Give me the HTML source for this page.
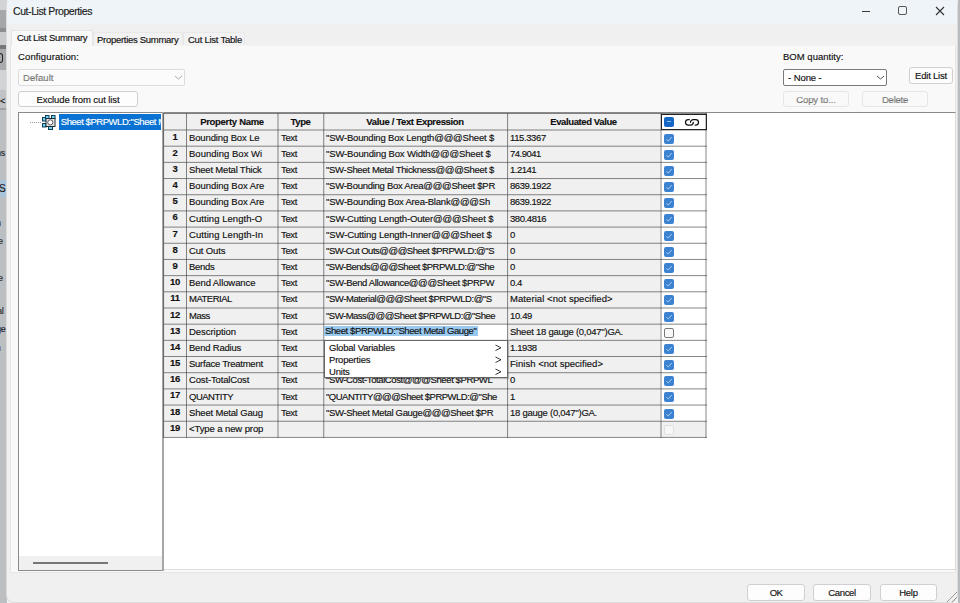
<!DOCTYPE html>
<html><head><meta charset="utf-8">
<style>
*{box-sizing:border-box;margin:0;padding:0}
html,body{width:960px;height:603px;overflow:hidden;background:#f3f3f3}
body{position:relative;font-family:"Liberation Sans",sans-serif;font-size:9.5px;letter-spacing:-0.2px;color:#111;-webkit-text-stroke:0.15px #111}
.a{position:absolute}
.t{position:absolute;white-space:nowrap;line-height:11px}
.btn{position:absolute;background:#fdfdfd;border:1px solid #d0d0d0;border-radius:3px;text-align:center;line-height:15px}
.dis{color:#a0a0a0;background:#f9f9f9;border-color:#e6e6e6}
.grid div.c{position:absolute;overflow:hidden;white-space:nowrap;line-height:15px;padding-left:2px}
.cb{position:absolute;width:10px;height:10px;border-radius:2px;background:#3b82d1}
</style></head><body>
<!-- background app strip -->
<div class="a" style="left:0;top:0;width:7px;height:603px;background:#bcbfc2"></div>
<div class="a" style="left:0;top:0;width:7px;height:10px;background:#d3d4d5"></div>
<div class="a" style="left:0;top:10px;width:7px;height:18px;background:#a5a7a9"></div>
<div class="a" style="left:0;top:28px;width:7px;height:4px;background:#8c8e90"></div>
<div class="a" style="left:0;top:32px;width:7px;height:13px;background:#c9cbcd"></div>
<div class="a" style="left:0;top:45px;width:7px;height:4px;background:#75777a"></div>
<div class="a" style="left:0;top:49px;width:7px;height:21px;background:#a9abae"></div>
<div class="a" style="left:0;top:53px;width:3px;height:10px;border:1.5px solid #222;border-left:none;border-radius:0 4px 4px 0"></div>
<div class="a" style="left:0;top:70px;width:7px;height:20px;background:#d2d3d4"></div>
<div class="a" style="left:0;top:90px;width:7px;height:20px;background:#c0c2c5"></div>
<div class="a" style="left:0;top:108px;width:7px;height:2px;background:#a0a2a5"></div>
<div class="t" style="left:0;top:96px;font-size:9px;color:#222">&lt;</div>
<div class="a" style="left:0;top:180px;width:7px;height:17px;background:#a9c3d8"></div>
<div class="t" style="left:-1px;top:183px;font-size:10px;color:#222">S</div>
<div class="t" style="left:-4px;top:148px;font-size:9px;color:#333">ns</div>
<div class="t" style="left:-4px;top:218px;font-size:9px;color:#444">n</div>
<div class="t" style="left:-2px;top:236px;font-size:9px;color:#333">e</div>
<div class="t" style="left:-2px;top:273px;font-size:9px;color:#333">e</div>
<div class="t" style="left:-3px;top:306px;font-size:9px;color:#333">al</div>
<div class="t" style="left:-4px;top:324px;font-size:9px;color:#223">ge</div>
<div class="t" style="left:-4px;top:343px;font-size:9px;color:#888">n</div>
<div class="a" style="left:958px;top:0;width:2px;height:603px;background:#b9bcbf"></div>

<!-- dialog -->
<div class="a" style="left:6px;top:0;width:952px;height:603px;background:#f0f0f0;border:1px solid #dcdcdc;border-top-color:#eef2f7;border-radius:5px 5px 8px 8px;overflow:hidden">
  <div class="a" style="left:0;top:0;width:952px;height:23px;background:#eff4f9"></div>
</div>
<div class="t" style="left: 13px; top: 6px; font-size: 10.5px; color: rgb(34, 34, 34); letter-spacing: -0.419px;">Cut-List Properties</div>
<!-- title controls -->
<div class="a" style="left:862px;top:10.5px;width:8px;height:1px;background:#3a3a3a"></div>
<div class="a" style="left:898px;top:6px;width:9px;height:9px;border:1.7px solid #555;border-radius:2px"></div>
<svg class="a" style="left:935px;top:6px" width="10" height="10" viewBox="0 0 10 10"><path d="M1 1L9 9M9 1L1 9" stroke="#333" stroke-width="1.1"></path></svg>

<!-- tab panel -->
<div class="a" style="left:10px;top:45px;width:946px;height:528px;background:#f9f9f9;border:1px solid #e6e6e6;border-top-color:#f3f3f3"></div>
<div class="a" style="left:11px;top:30px;width:82px;height:16px;background:#f9f9f9;border:1px solid #e4e4e4;border-bottom:none"></div>
<div class="a" style="left:93px;top:32px;width:90px;height:13px;background:#f2f2f2;border:1px solid #e8e8e8;border-bottom:none"></div>
<div class="a" style="left:183px;top:32px;width:62px;height:13px;background:#f2f2f2;border:1px solid #e8e8e8;border-bottom:none"></div>
<div class="t" style="left: 17px; top: 32px; letter-spacing: -0.325px;">Cut List Summary</div>
<div class="t" style="left: 97px; top: 33.5px; letter-spacing: -0.288px;">Properties Summary</div>
<div class="t" style="left: 188px; top: 33.5px; letter-spacing: -0.242px;">Cut List Table</div>

<!-- left controls -->
<div class="t" style="left: 18px; top: 51px; letter-spacing: 0.131px;">Configuration:</div>
<div class="a" style="left:18px;top:69px;width:167px;height:17px;background:#fbfbfb;border:1px solid #dcdcdc;border-radius:2px"></div>
<div class="t" style="left: 23px; top: 72px; color: rgb(154, 154, 154); letter-spacing: 0.057px;">Default</div>
<svg class="a" style="left:173.5px;top:74.5px" width="9" height="6" viewBox="0 0 9 6"><path d="M1 1L4.5 4L8 1" stroke="#a0a0a0" fill="none" stroke-width="0.9"></path></svg>
<div class="btn" style="left:18px;top:91px;width:120px;height:16px"><span style="letter-spacing: -0.096px;">Exclude from cut list</span></div>

<!-- right controls -->
<div class="t" style="left: 783px; top: 51px; letter-spacing: 0.016px;">BOM quantity:</div>
<div class="a" style="left:783px;top:69px;width:104px;height:17px;background:#fff;border:1px solid #7a7a7a;border-radius:2px"></div>
<div class="t" style="left: 788px; top: 72px; letter-spacing: -0.077px;">- None -</div>
<svg class="a" style="left:875.5px;top:74.5px" width="9" height="6" viewBox="0 0 9 6"><path d="M1 1L4.5 4L8 1" stroke="#444" fill="none" stroke-width="0.9"></path></svg>
<div class="btn" style="left:909px;top:67px;width:44px;height:17px"><span style="letter-spacing: -0.2px;">Edit List</span></div>
<div class="btn dis" style="left:783px;top:91px;width:66px;height:16px"><span style="letter-spacing: -0.107px;">Copy to...</span></div>
<div class="btn dis" style="left:862px;top:91px;width:66px;height:16px"><span style="letter-spacing: -0.244px;">Delete</span></div>

<!-- tree -->
<div class="a" style="left:18px;top:112px;width:146px;height:459px;background:#fff;border:1px solid #8a8a8a;border-right:none"></div>
<div class="a" style="left:19px;top:556px;width:144px;height:14px;background:#f0f0f0"></div>
<div class="a" style="left:33px;top:562px;width:75px;height:1.5px;background:#777"></div>
<div class="a" style="left:30px;top:122px;width:11px;height:0;border-top:1px dotted #999"></div>
<svg class="a" style="left:42px;top:115px" width="14" height="15" viewBox="0 0 14 15">
<rect x="0.5" y="2.5" width="3.5" height="3.5" fill="#74d2f2" stroke="#0e3f58" stroke-width="1"></rect>
<rect x="0.5" y="8.5" width="3.5" height="3.5" fill="#74d2f2" stroke="#0e3f58" stroke-width="1"></rect>
<rect x="3.5" y="0.5" width="3.5" height="3" fill="#74d2f2" stroke="#0e3f58" stroke-width="1"></rect>
<rect x="9.5" y="0.5" width="3.5" height="3" fill="#74d2f2" stroke="#0e3f58" stroke-width="1"></rect>
<rect x="6.5" y="11.5" width="4" height="3" fill="#74d2f2" stroke="#0e3f58" stroke-width="1"></rect>
<rect x="4" y="3.5" width="9" height="8" fill="#e8e8e8" stroke="#1e2e36" stroke-width="1"></rect>
<circle cx="8.3" cy="7.4" r="2.6" fill="#fff" stroke="#555" stroke-width="1"></circle>
</svg>
<div class="a" style="left:59px;top:114px;width:102px;height:16px;background:#0a72d2;overflow:hidden"><div class="t" style="left:1.8px;top:2px;color:#fff;-webkit-text-stroke:0.15px #fff;letter-spacing:-0.45px">Sheet $PRPWLD:"Sheet Metal</div></div>
<div class="a" style="left:162px;top:112px;width:2px;height:459px;background:#a6a6a6"></div>

<!-- table area -->
<div class="a" style="left:164px;top:112px;width:792px;height:458px;background:#fff;border-top:1px solid #8a8a8a;border-right:1px solid #dcdcdc;border-bottom:1px solid #dcdcdc"></div>
<div class="a" style="left:164px;top:113px;width:542px;height:324.42px;background:#f0f0f0"></div>
<div class="a" style="left:660px;top:130.0px;width:46px;height:291.24px;background:#fff"></div>
<div class="a" style="left:660px;top:113px;width:46px;height:17.0px;background:#fff"></div>
<div class="a" style="left:323px;top:324px;width:184px;height:16px;background:#fff"></div>
<div class="a" style="left:164px;top:113px;width:543px;height:1px;background:rgba(60,60,60,0.620)"></div>
<div class="a" style="left:164px;top:129px;width:543px;height:1px;background:rgba(60,60,60,0.310)"></div>
<div class="a" style="left:164px;top:130px;width:543px;height:1px;background:rgba(60,60,60,0.310)"></div>
<div class="a" style="left:164px;top:145px;width:543px;height:1px;background:rgba(60,60,60,0.198)"></div>
<div class="a" style="left:164px;top:146px;width:543px;height:1px;background:rgba(60,60,60,0.422)"></div>
<div class="a" style="left:164px;top:161px;width:543px;height:1px;background:rgba(60,60,60,0.087)"></div>
<div class="a" style="left:164px;top:162px;width:543px;height:1px;background:rgba(60,60,60,0.533)"></div>
<div class="a" style="left:164px;top:178px;width:543px;height:1px;background:rgba(60,60,60,0.595)"></div>
<div class="a" style="left:164px;top:179px;width:543px;height:1px;background:rgba(60,60,60,0.025)"></div>
<div class="a" style="left:164px;top:194px;width:543px;height:1px;background:rgba(60,60,60,0.484)"></div>
<div class="a" style="left:164px;top:195px;width:543px;height:1px;background:rgba(60,60,60,0.136)"></div>
<div class="a" style="left:164px;top:210px;width:543px;height:1px;background:rgba(60,60,60,0.372)"></div>
<div class="a" style="left:164px;top:211px;width:543px;height:1px;background:rgba(60,60,60,0.248)"></div>
<div class="a" style="left:164px;top:226px;width:543px;height:1px;background:rgba(60,60,60,0.260)"></div>
<div class="a" style="left:164px;top:227px;width:543px;height:1px;background:rgba(60,60,60,0.360)"></div>
<div class="a" style="left:164px;top:242px;width:543px;height:1px;background:rgba(60,60,60,0.149)"></div>
<div class="a" style="left:164px;top:243px;width:543px;height:1px;background:rgba(60,60,60,0.471)"></div>
<div class="a" style="left:164px;top:258px;width:543px;height:1px;background:rgba(60,60,60,0.037)"></div>
<div class="a" style="left:164px;top:259px;width:543px;height:1px;background:rgba(60,60,60,0.583)"></div>
<div class="a" style="left:164px;top:275px;width:543px;height:1px;background:rgba(60,60,60,0.546)"></div>
<div class="a" style="left:164px;top:276px;width:543px;height:1px;background:rgba(60,60,60,0.074)"></div>
<div class="a" style="left:164px;top:291px;width:543px;height:1px;background:rgba(60,60,60,0.434)"></div>
<div class="a" style="left:164px;top:292px;width:543px;height:1px;background:rgba(60,60,60,0.186)"></div>
<div class="a" style="left:164px;top:307px;width:543px;height:1px;background:rgba(60,60,60,0.322)"></div>
<div class="a" style="left:164px;top:308px;width:543px;height:1px;background:rgba(60,60,60,0.298)"></div>
<div class="a" style="left:164px;top:323px;width:543px;height:1px;background:rgba(60,60,60,0.211)"></div>
<div class="a" style="left:164px;top:324px;width:543px;height:1px;background:rgba(60,60,60,0.409)"></div>
<div class="a" style="left:164px;top:339px;width:543px;height:1px;background:rgba(60,60,60,0.099)"></div>
<div class="a" style="left:164px;top:340px;width:543px;height:1px;background:rgba(60,60,60,0.521)"></div>
<div class="a" style="left:164px;top:356px;width:543px;height:1px;background:rgba(60,60,60,0.608)"></div>
<div class="a" style="left:164px;top:372px;width:543px;height:1px;background:rgba(60,60,60,0.496)"></div>
<div class="a" style="left:164px;top:373px;width:543px;height:1px;background:rgba(60,60,60,0.124)"></div>
<div class="a" style="left:164px;top:388px;width:543px;height:1px;background:rgba(60,60,60,0.384)"></div>
<div class="a" style="left:164px;top:389px;width:543px;height:1px;background:rgba(60,60,60,0.236)"></div>
<div class="a" style="left:164px;top:404px;width:543px;height:1px;background:rgba(60,60,60,0.273)"></div>
<div class="a" style="left:164px;top:405px;width:543px;height:1px;background:rgba(60,60,60,0.347)"></div>
<div class="a" style="left:164px;top:420px;width:543px;height:1px;background:rgba(60,60,60,0.161)"></div>
<div class="a" style="left:164px;top:421px;width:543px;height:1px;background:rgba(60,60,60,0.459)"></div>
<div class="a" style="left:164px;top:436px;width:543px;height:1px;background:rgba(60,60,60,0.050)"></div>
<div class="a" style="left:164px;top:437px;width:543px;height:1px;background:rgba(60,60,60,0.570)"></div>
<div class="a" style="left:163px;top:113px;width:1px;height:324.92px;background:rgba(60,60,60,0.558)"></div>
<div class="a" style="left:164px;top:113px;width:1px;height:324.92px;background:rgba(60,60,60,0.062)"></div>
<div class="a" style="left:186px;top:113px;width:1px;height:324.92px;background:rgba(60,60,60,0.620)"></div>
<div class="a" style="left:277px;top:113px;width:1px;height:324.92px;background:rgba(60,60,60,0.310)"></div>
<div class="a" style="left:278px;top:113px;width:1px;height:324.92px;background:rgba(60,60,60,0.310)"></div>
<div class="a" style="left:323px;top:113px;width:1px;height:324.92px;background:rgba(60,60,60,0.465)"></div>
<div class="a" style="left:324px;top:113px;width:1px;height:324.92px;background:rgba(60,60,60,0.155)"></div>
<div class="a" style="left:507px;top:113px;width:1px;height:324.92px;background:rgba(60,60,60,0.558)"></div>
<div class="a" style="left:508px;top:113px;width:1px;height:324.92px;background:rgba(60,60,60,0.062)"></div>
<div class="a" style="left:660px;top:113px;width:1px;height:324.92px;background:rgba(60,60,60,0.310)"></div>
<div class="a" style="left:661px;top:113px;width:1px;height:324.92px;background:rgba(60,60,60,0.310)"></div>
<div class="a" style="left:705px;top:113px;width:1px;height:324.92px;background:rgba(60,60,60,0.310)"></div>
<div class="a" style="left:706px;top:113px;width:1px;height:324.92px;background:rgba(60,60,60,0.310)"></div>
<div class="t" style="left:186px;width:92px;top:116px;text-align:center;font-weight:bold"><span style="letter-spacing: -0.306px;">Property Name</span></div>
<div class="t" style="left:278px;width:45px;top:116px;text-align:center;font-weight:bold"><span style="letter-spacing: -0.368px;">Type</span></div>
<div class="t" style="left:323px;width:184px;top:116px;text-align:center;font-weight:bold"><span style="letter-spacing: -0.345px;">Value / Text Expression</span></div>
<div class="t" style="left:507px;width:153px;top:116px;text-align:center;font-weight:bold"><span style="letter-spacing: -0.396px;">Evaluated Value</span></div>
<div class="a" style="left:660.5px;top:113.5px;width:46px;height:16.5px;border:1.2px solid #222;background:transparent"></div>
<div class="a" style="left:664px;top:117px;width:10px;height:10px;background:#1467c4;border-radius:2px"></div>
<div class="a" style="left:667px;top:121px;width:4px;height:1.2px;background:#8fc0ef"></div>
<svg class="a" style="left:684px;top:118px" width="16" height="9" viewBox="0 0 16 9"><path d="M5.3 1.5H4.35A2.85 2.85 0 0 0 4.35 7.2H6.45A2.85 2.85 0 0 0 9.3 4.35M6.5 4.35A2.85 2.85 0 0 1 9.35 1.5H11.65A2.85 2.85 0 0 1 11.65 7.2H11.2" stroke="#111" stroke-width="1.25" fill="none" stroke-linecap="round"></path></svg>
<div class="t" style="left:164px;width:22px;top:130.5px;text-align:center;font-weight:bold">1</div>
<div class="a" style="left:189px;top:131.6px;width:88px;height:12px;overflow:hidden"><div class="t" style="left: 0px; top: 0px; letter-spacing: -0.125px;">Bounding Box Le</div></div>
<div class="t" style="left: 281px; top: 131.6px; letter-spacing: -0.331px;">Text</div>
<div class="a" style="left:326px;top:131.6px;width:180px;height:12px;overflow:hidden"><div class="t" style="left: 0px; top: 0px; letter-spacing: -0.188px;">"SW-Bounding Box Length@@@Sheet $</div></div>
<div class="a" style="left:510px;top:131.6px;width:149px;height:12px;overflow:hidden"><div class="t" style="left: 0px; top: 0px; letter-spacing: -0.391px;">115.3367</div></div>
<div class="cb" style="left:664px;top:133.5px"></div>
<svg class="a" style="left:665px;top:134.5px" width="8" height="8" viewBox="0 0 8 8"><path d="M1.3 4.2L3.2 6L6.8 2" stroke="#b5d4f2" stroke-width="0.9" fill="none"></path></svg>
<div class="t" style="left:164px;width:22px;top:146.7px;text-align:center;font-weight:bold">2</div>
<div class="a" style="left:189px;top:147.8px;width:88px;height:12px;overflow:hidden"><div class="t" style="left: 0px; top: 0px; letter-spacing: 0.022px;">Bounding Box Wi</div></div>
<div class="t" style="left: 281px; top: 147.8px; letter-spacing: -0.331px;">Text</div>
<div class="a" style="left:326px;top:147.8px;width:180px;height:12px;overflow:hidden"><div class="t" style="left: 0px; top: 0px; letter-spacing: -0.148px;">"SW-Bounding Box Width@@@Sheet $</div></div>
<div class="a" style="left:510px;top:147.8px;width:149px;height:12px;overflow:hidden"><div class="t" style="left: 0px; top: 0px; letter-spacing: -0.5px;">74.9041</div></div>
<div class="cb" style="left:664px;top:149.7px"></div>
<svg class="a" style="left:665px;top:150.7px" width="8" height="8" viewBox="0 0 8 8"><path d="M1.3 4.2L3.2 6L6.8 2" stroke="#b5d4f2" stroke-width="0.9" fill="none"></path></svg>
<div class="t" style="left:164px;width:22px;top:162.9px;text-align:center;font-weight:bold">3</div>
<div class="a" style="left:189px;top:164.0px;width:88px;height:12px;overflow:hidden"><div class="t" style="left: 0px; top: 0px; letter-spacing: -0.192px;">Sheet Metal Thick</div></div>
<div class="t" style="left: 281px; top: 164px; letter-spacing: -0.331px;">Text</div>
<div class="a" style="left:326px;top:164.0px;width:180px;height:12px;overflow:hidden"><div class="t" style="left: 0px; top: 0px; letter-spacing: -0.322px;">"SW-Sheet Metal Thickness@@@Sheet $</div></div>
<div class="a" style="left:510px;top:164.0px;width:149px;height:12px;overflow:hidden"><div class="t" style="left: 0px; top: 0px; letter-spacing: -0.5px;">1.2141</div></div>
<div class="cb" style="left:664px;top:165.9px"></div>
<svg class="a" style="left:665px;top:166.9px" width="8" height="8" viewBox="0 0 8 8"><path d="M1.3 4.2L3.2 6L6.8 2" stroke="#b5d4f2" stroke-width="0.9" fill="none"></path></svg>
<div class="t" style="left:164px;width:22px;top:179.0px;text-align:center;font-weight:bold">4</div>
<div class="a" style="left:189px;top:180.1px;width:88px;height:12px;overflow:hidden"><div class="t" style="left: 0px; top: 0px; letter-spacing: -0.047px;">Bounding Box Are</div></div>
<div class="t" style="left: 281px; top: 180.1px; letter-spacing: -0.331px;">Text</div>
<div class="a" style="left:326px;top:180.1px;width:180px;height:12px;overflow:hidden"><div class="t" style="left: 0px; top: 0px; letter-spacing: -0.27px;">"SW-Bounding Box Area@@@Sheet $PR</div></div>
<div class="a" style="left:510px;top:180.1px;width:149px;height:12px;overflow:hidden"><div class="t" style="left: 0px; top: 0px; letter-spacing: -0.457px;">8639.1922</div></div>
<div class="cb" style="left:664px;top:182.0px"></div>
<svg class="a" style="left:665px;top:183.0px" width="8" height="8" viewBox="0 0 8 8"><path d="M1.3 4.2L3.2 6L6.8 2" stroke="#b5d4f2" stroke-width="0.9" fill="none"></path></svg>
<div class="t" style="left:164px;width:22px;top:195.2px;text-align:center;font-weight:bold">5</div>
<div class="a" style="left:189px;top:196.3px;width:88px;height:12px;overflow:hidden"><div class="t" style="left: 0px; top: 0px; letter-spacing: -0.047px;">Bounding Box Are</div></div>
<div class="t" style="left: 281px; top: 196.3px; letter-spacing: -0.331px;">Text</div>
<div class="a" style="left:326px;top:196.3px;width:180px;height:12px;overflow:hidden"><div class="t" style="left: 0px; top: 0px; letter-spacing: -0.203px;">"SW-Bounding Box Area-Blank@@@Sh</div></div>
<div class="a" style="left:510px;top:196.3px;width:149px;height:12px;overflow:hidden"><div class="t" style="left: 0px; top: 0px; letter-spacing: -0.457px;">8639.1922</div></div>
<div class="cb" style="left:664px;top:198.2px"></div>
<svg class="a" style="left:665px;top:199.2px" width="8" height="8" viewBox="0 0 8 8"><path d="M1.3 4.2L3.2 6L6.8 2" stroke="#b5d4f2" stroke-width="0.9" fill="none"></path></svg>
<div class="t" style="left:164px;width:22px;top:211.4px;text-align:center;font-weight:bold">6</div>
<div class="a" style="left:189px;top:212.5px;width:88px;height:12px;overflow:hidden"><div class="t" style="left: 0px; top: 0px; letter-spacing: 0.053px;">Cutting Length-O</div></div>
<div class="t" style="left: 281px; top: 212.5px; letter-spacing: -0.331px;">Text</div>
<div class="a" style="left:326px;top:212.5px;width:180px;height:12px;overflow:hidden"><div class="t" style="left: 0px; top: 0px; letter-spacing: -0.141px;">"SW-Cutting Length-Outer@@@Sheet $</div></div>
<div class="a" style="left:510px;top:212.5px;width:149px;height:12px;overflow:hidden"><div class="t" style="left: 0px; top: 0px; letter-spacing: -0.429px;">380.4816</div></div>
<div class="cb" style="left:664px;top:214.4px"></div>
<svg class="a" style="left:665px;top:215.4px" width="8" height="8" viewBox="0 0 8 8"><path d="M1.3 4.2L3.2 6L6.8 2" stroke="#b5d4f2" stroke-width="0.9" fill="none"></path></svg>
<div class="t" style="left:164px;width:22px;top:227.6px;text-align:center;font-weight:bold">7</div>
<div class="a" style="left:189px;top:228.7px;width:88px;height:12px;overflow:hidden"><div class="t" style="left: 0px; top: 0px; letter-spacing: 0.066px;">Cutting Length-In</div></div>
<div class="t" style="left: 281px; top: 228.7px; letter-spacing: -0.331px;">Text</div>
<div class="a" style="left:326px;top:228.7px;width:180px;height:12px;overflow:hidden"><div class="t" style="left: 0px; top: 0px; letter-spacing: -0.126px;">"SW-Cutting Length-Inner@@@Sheet $</div></div>
<div class="a" style="left:510px;top:228.7px;width:149px;height:12px;overflow:hidden"><div class="t" style="left:0;top:0;">0</div></div>
<div class="cb" style="left:664px;top:230.6px"></div>
<svg class="a" style="left:665px;top:231.6px" width="8" height="8" viewBox="0 0 8 8"><path d="M1.3 4.2L3.2 6L6.8 2" stroke="#b5d4f2" stroke-width="0.9" fill="none"></path></svg>
<div class="t" style="left:164px;width:22px;top:243.8px;text-align:center;font-weight:bold">8</div>
<div class="a" style="left:189px;top:244.9px;width:88px;height:12px;overflow:hidden"><div class="t" style="left: 0px; top: 0px; letter-spacing: -0.149px;">Cut Outs</div></div>
<div class="t" style="left: 281px; top: 244.9px; letter-spacing: -0.331px;">Text</div>
<div class="a" style="left:326px;top:244.9px;width:180px;height:12px;overflow:hidden"><div class="t" style="left: 0px; top: 0px; letter-spacing: -0.484px;">"SW-Cut Outs@@@Sheet $PRPWLD:@"S</div></div>
<div class="a" style="left:510px;top:244.9px;width:149px;height:12px;overflow:hidden"><div class="t" style="left:0;top:0;">0</div></div>
<div class="cb" style="left:664px;top:246.8px"></div>
<svg class="a" style="left:665px;top:247.8px" width="8" height="8" viewBox="0 0 8 8"><path d="M1.3 4.2L3.2 6L6.8 2" stroke="#b5d4f2" stroke-width="0.9" fill="none"></path></svg>
<div class="t" style="left:164px;width:22px;top:259.9px;text-align:center;font-weight:bold">9</div>
<div class="a" style="left:189px;top:261.0px;width:88px;height:12px;overflow:hidden"><div class="t" style="left: 0px; top: 0px; letter-spacing: -0.327px;">Bends</div></div>
<div class="t" style="left: 281px; top: 261px; letter-spacing: -0.331px;">Text</div>
<div class="a" style="left:326px;top:261.0px;width:180px;height:12px;overflow:hidden"><div class="t" style="left: 0px; top: 0px; letter-spacing: -0.5px;">"SW-Bends@@@Sheet $PRPWLD:@"She</div></div>
<div class="a" style="left:510px;top:261.0px;width:149px;height:12px;overflow:hidden"><div class="t" style="left:0;top:0;">0</div></div>
<div class="cb" style="left:664px;top:262.9px"></div>
<svg class="a" style="left:665px;top:263.9px" width="8" height="8" viewBox="0 0 8 8"><path d="M1.3 4.2L3.2 6L6.8 2" stroke="#b5d4f2" stroke-width="0.9" fill="none"></path></svg>
<div class="t" style="left:164px;width:22px;top:276.1px;text-align:center;font-weight:bold">10</div>
<div class="a" style="left:189px;top:277.2px;width:88px;height:12px;overflow:hidden"><div class="t" style="left: 0px; top: 0px; letter-spacing: -0.087px;">Bend Allowance</div></div>
<div class="t" style="left: 281px; top: 277.2px; letter-spacing: -0.331px;">Text</div>
<div class="a" style="left:326px;top:277.2px;width:180px;height:12px;overflow:hidden"><div class="t" style="left: 0px; top: 0px; letter-spacing: -0.358px;">"SW-Bend Allowance@@@Sheet $PRPW</div></div>
<div class="a" style="left:510px;top:277.2px;width:149px;height:12px;overflow:hidden"><div class="t" style="left: 0px; top: 0px; letter-spacing: -0.5px;">0.4</div></div>
<div class="cb" style="left:664px;top:279.1px"></div>
<svg class="a" style="left:665px;top:280.1px" width="8" height="8" viewBox="0 0 8 8"><path d="M1.3 4.2L3.2 6L6.8 2" stroke="#b5d4f2" stroke-width="0.9" fill="none"></path></svg>
<div class="t" style="left:164px;width:22px;top:292.3px;text-align:center;font-weight:bold">11</div>
<div class="a" style="left:189px;top:293.4px;width:88px;height:12px;overflow:hidden"><div class="t" style="left: 0px; top: 0px; letter-spacing: -0.5px;">MATERIAL</div></div>
<div class="t" style="left: 281px; top: 293.4px; letter-spacing: -0.331px;">Text</div>
<div class="a" style="left:326px;top:293.4px;width:180px;height:12px;overflow:hidden"><div class="t" style="left: 0px; top: 0px; letter-spacing: -0.44px;">"SW-Material@@@Sheet $PRPWLD:@"S</div></div>
<div class="a" style="left:510px;top:293.4px;width:149px;height:12px;overflow:hidden"><div class="t" style="left: 0px; top: 0px; letter-spacing: 0.076px;">Material &lt;not specified&gt;</div></div>
<div class="cb" style="left:664px;top:295.3px"></div>
<svg class="a" style="left:665px;top:296.3px" width="8" height="8" viewBox="0 0 8 8"><path d="M1.3 4.2L3.2 6L6.8 2" stroke="#b5d4f2" stroke-width="0.9" fill="none"></path></svg>
<div class="t" style="left:164px;width:22px;top:308.5px;text-align:center;font-weight:bold">12</div>
<div class="a" style="left:189px;top:309.6px;width:88px;height:12px;overflow:hidden"><div class="t" style="left: 0px; top: 0px; letter-spacing: -0.5px;">Mass</div></div>
<div class="t" style="left: 281px; top: 309.6px; letter-spacing: -0.331px;">Text</div>
<div class="a" style="left:326px;top:309.6px;width:180px;height:12px;overflow:hidden"><div class="t" style="left: 0px; top: 0px; letter-spacing: -0.5px;">"SW-Mass@@@Sheet $PRPWLD:@"Shee</div></div>
<div class="a" style="left:510px;top:309.6px;width:149px;height:12px;overflow:hidden"><div class="t" style="left: 0px; top: 0px; letter-spacing: -0.356px;">10.49</div></div>
<div class="cb" style="left:664px;top:311.5px"></div>
<svg class="a" style="left:665px;top:312.5px" width="8" height="8" viewBox="0 0 8 8"><path d="M1.3 4.2L3.2 6L6.8 2" stroke="#b5d4f2" stroke-width="0.9" fill="none"></path></svg>
<div class="t" style="left:164px;width:22px;top:324.7px;text-align:center;font-weight:bold">13</div>
<div class="a" style="left:189px;top:325.8px;width:88px;height:12px;overflow:hidden"><div class="t" style="left: 0px; top: 0px; letter-spacing: -0.039px;">Description</div></div>
<div class="t" style="left: 281px; top: 325.8px; letter-spacing: -0.331px;">Text</div>
<div class="a" style="left:510px;top:325.8px;width:149px;height:12px;overflow:hidden"><div class="t" style="left: 0px; top: 0px; letter-spacing: -0.253px;">Sheet 18 gauge (0,047'')GA.</div></div>
<div class="cb" style="left:664px;top:327.7px;background:#f8f8f8;border:1.2px solid #7a7a7a"></div>
<div class="t" style="left:164px;width:22px;top:340.8px;text-align:center;font-weight:bold">14</div>
<div class="a" style="left:189px;top:341.9px;width:88px;height:12px;overflow:hidden"><div class="t" style="left: 0px; top: 0px; letter-spacing: -0.218px;">Bend Radius</div></div>
<div class="t" style="left: 281px; top: 341.9px; letter-spacing: -0.331px;">Text</div>
<div class="a" style="left:510px;top:341.9px;width:149px;height:12px;overflow:hidden"><div class="t" style="left: 0px; top: 0px; letter-spacing: -0.385px;">1.1938</div></div>
<div class="cb" style="left:664px;top:343.8px"></div>
<svg class="a" style="left:665px;top:344.8px" width="8" height="8" viewBox="0 0 8 8"><path d="M1.3 4.2L3.2 6L6.8 2" stroke="#b5d4f2" stroke-width="0.9" fill="none"></path></svg>
<div class="t" style="left:164px;width:22px;top:357.0px;text-align:center;font-weight:bold">15</div>
<div class="a" style="left:189px;top:358.1px;width:88px;height:12px;overflow:hidden"><div class="t" style="left: 0px; top: 0px; letter-spacing: -0.256px;">Surface Treatment</div></div>
<div class="t" style="left: 281px; top: 358.1px; letter-spacing: -0.331px;">Text</div>
<div class="a" style="left:510px;top:358.1px;width:149px;height:12px;overflow:hidden"><div class="t" style="left: 0px; top: 0px; letter-spacing: 0.026px;">Finish &lt;not specified&gt;</div></div>
<div class="cb" style="left:664px;top:360.0px"></div>
<svg class="a" style="left:665px;top:361.0px" width="8" height="8" viewBox="0 0 8 8"><path d="M1.3 4.2L3.2 6L6.8 2" stroke="#b5d4f2" stroke-width="0.9" fill="none"></path></svg>
<div class="t" style="left:164px;width:22px;top:373.2px;text-align:center;font-weight:bold">16</div>
<div class="a" style="left:189px;top:374.3px;width:88px;height:12px;overflow:hidden"><div class="t" style="left: 0px; top: 0px; letter-spacing: -0.15px;">Cost-TotalCost</div></div>
<div class="t" style="left: 281px; top: 374.3px; letter-spacing: -0.331px;">Text</div>
<div class="a" style="left:326px;top:374.3px;width:180px;height:12px;overflow:hidden"><div class="t" style="left: 0px; top: 0px; letter-spacing: -0.398px;">"SW-Cost-TotalCost@@@Sheet $PRPWL</div></div>
<div class="a" style="left:510px;top:374.3px;width:149px;height:12px;overflow:hidden"><div class="t" style="left:0;top:0;">0</div></div>
<div class="cb" style="left:664px;top:376.2px"></div>
<svg class="a" style="left:665px;top:377.2px" width="8" height="8" viewBox="0 0 8 8"><path d="M1.3 4.2L3.2 6L6.8 2" stroke="#b5d4f2" stroke-width="0.9" fill="none"></path></svg>
<div class="t" style="left:164px;width:22px;top:389.4px;text-align:center;font-weight:bold">17</div>
<div class="a" style="left:189px;top:390.5px;width:88px;height:12px;overflow:hidden"><div class="t" style="left: 0px; top: 0px; letter-spacing: -0.5px;">QUANTITY</div></div>
<div class="t" style="left: 281px; top: 390.5px; letter-spacing: -0.331px;">Text</div>
<div class="a" style="left:326px;top:390.5px;width:180px;height:12px;overflow:hidden"><div class="t" style="left: 0px; top: 0px; letter-spacing: -0.5px;">"QUANTITY@@@Sheet $PRPWLD:@"She</div></div>
<div class="a" style="left:510px;top:390.5px;width:149px;height:12px;overflow:hidden"><div class="t" style="left:0;top:0;">1</div></div>
<div class="cb" style="left:664px;top:392.4px"></div>
<svg class="a" style="left:665px;top:393.4px" width="8" height="8" viewBox="0 0 8 8"><path d="M1.3 4.2L3.2 6L6.8 2" stroke="#b5d4f2" stroke-width="0.9" fill="none"></path></svg>
<div class="t" style="left:164px;width:22px;top:405.6px;text-align:center;font-weight:bold">18</div>
<div class="a" style="left:189px;top:406.7px;width:88px;height:12px;overflow:hidden"><div class="t" style="left: 0px; top: 0px; letter-spacing: -0.174px;">Sheet Metal Gaug</div></div>
<div class="t" style="left: 281px; top: 406.7px; letter-spacing: -0.331px;">Text</div>
<div class="a" style="left:326px;top:406.7px;width:180px;height:12px;overflow:hidden"><div class="t" style="left: 0px; top: 0px; letter-spacing: -0.337px;">"SW-Sheet Metal Gauge@@@Sheet $PR</div></div>
<div class="a" style="left:510px;top:406.7px;width:149px;height:12px;overflow:hidden"><div class="t" style="left: 0px; top: 0px; letter-spacing: -0.255px;">18 gauge (0,047'')GA.</div></div>
<div class="cb" style="left:664px;top:408.6px"></div>
<svg class="a" style="left:665px;top:409.6px" width="8" height="8" viewBox="0 0 8 8"><path d="M1.3 4.2L3.2 6L6.8 2" stroke="#b5d4f2" stroke-width="0.9" fill="none"></path></svg>
<div class="t" style="left:164px;width:22px;top:421.7px;text-align:center;font-weight:bold">19</div>
<div class="a" style="left:189px;top:422.8px;width:88px;height:12px;overflow:hidden"><div class="t" style="left: 0px; top: 0px; letter-spacing: -0.093px;">&lt;Type a new prop</div></div>
<div class="cb" style="left:664px;top:424.7px;background:#f7f7f7;border:1px solid #e0e0e0"></div>
<div class="a" style="left:324px;top:325.5px;width:154px;height:10px;background:#99c9ef"></div>
<div class="t" style="left:325px;top:325px;color:#111;letter-spacing:-0.4px">Sheet $PRPWLD:"Sheet Metal Gauge"</div>
<div class="a" style="left:324px;top:340px;width:184px;height:38px;background:#fff;border:1px solid #666;box-shadow:1px 1px 1px rgba(0,0,0,.2)"></div>
<div class="t" style="left:329px;top:341.5px;">Global Variables</div>
<svg class="a" style="left:494px;top:343.5px" width="9" height="8" viewBox="0 0 9 8"><path d="M1.5 1L7 3.75L1.5 6.5" stroke="#222" stroke-width="0.9" fill="none"></path></svg>
<div class="t" style="left:329px;top:353.7px;">Properties</div>
<svg class="a" style="left:494px;top:355.7px" width="9" height="8" viewBox="0 0 9 8"><path d="M1.5 1L7 3.75L1.5 6.5" stroke="#222" stroke-width="0.9" fill="none"></path></svg>
<div class="t" style="left:329px;top:365.9px;">Units</div>
<svg class="a" style="left:494px;top:367.9px" width="9" height="8" viewBox="0 0 9 8"><path d="M1.5 1L7 3.75L1.5 6.5" stroke="#222" stroke-width="0.9" fill="none"></path></svg>

<!-- bottom buttons -->
<div class="btn" style="left:747px;top:584px;width:58px;height:17px"><span style="letter-spacing: -0.5px;">OK</span></div>
<div class="btn" style="left:813px;top:584px;width:58px;height:17px"><span style="letter-spacing: -0.329px;">Cancel</span></div>
<div class="btn" style="left:880px;top:584px;width:57px;height:17px"><span style="letter-spacing: -0.213px;">Help</span></div>
<svg class="a" style="left:944px;top:589px" width="14" height="14" viewBox="0 0 14 14"><path d="M13 3L3 13M13 8L8 13" stroke="#999" stroke-width="1"></path></svg>

</body></html>
